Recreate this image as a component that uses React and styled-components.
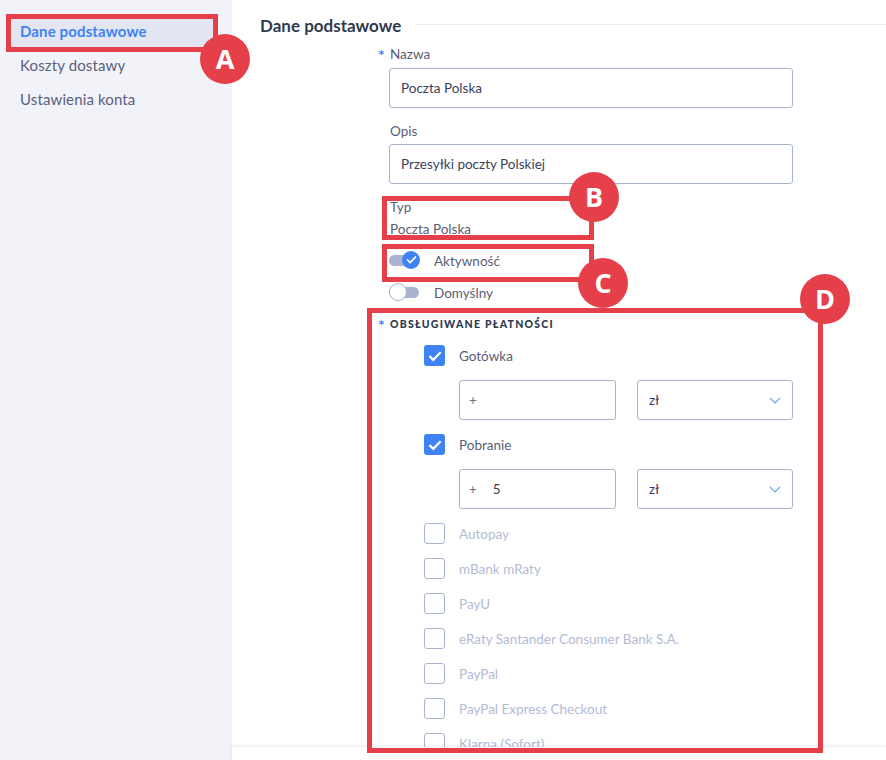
import React from "react";
import styled, { createGlobalStyle } from "styled-components";

const Global = createGlobalStyle`
  html, body { margin: 0; padding: 0; height: 760px; overflow: hidden; background: #fff; }
  * { box-sizing: border-box; }
  body { font-family: "Lato", "Noto Sans", sans-serif; color: #50536b; }
`;

const Page = styled.div`
  position: relative;
  display: flex;
  width: 886px;
  height: 760px;
  overflow: hidden;
`;

const Sidebar = styled.nav`
  flex: 0 0 232px;
  display: flex;
  flex-direction: column;
  padding: 14px 17px 0 8px;
  background: #f2f3f8;
`;

const NavItem = styled.div`
  height: 34px;
  padding-left: 12px;
  line-height: 34px;
  font-size: 15px;
  letter-spacing: 0.13px;
  font-weight: ${(props) => (props.$active ? 700 : 400)};
  color: ${(props) => (props.$active ? "#3f82f4" : "#5c6080")};
  background: ${(props) => (props.$active ? "#e3e6f0" : "transparent")};
`;

const Main = styled.main`
  flex: 1;
  padding: 14px 0 0 28px;
`;

const Heading = styled.div`
  display: flex;
  align-items: center;
  gap: 15px;
  height: 22px;
  margin-bottom: 8px;
  font-size: 17px;
  font-weight: 700;
  color: #2f3a4f;
  white-space: nowrap;
  &::after {
    content: "";
    flex: 1;
    height: 1px;
    margin-top: -2px;
    background: #ececf0;
  }
`;

const Form = styled.div`
  width: 404px;
  margin-left: 129px;
  display: flex;
  flex-direction: column;
`;

const Label = styled.div`
  position: relative;
  height: 20px;
  margin-bottom: ${(props) => props.$gap || 4}px;
  padding-left: 1px;
  line-height: 20px;
  font-size: 13.5px;
  color: #5a5d72;
`;

const Star = styled.span`
  position: absolute;
  left: -11px;
  top: 1px;
  font-size: 16px;
  color: #3f82f4;
  font-weight: 700;
`;

const Input = styled.div`
  display: flex;
  align-items: center;
  gap: 16px;
  width: ${(props) => props.$width || "100%"};
  height: 40px;
  padding: 0 ${(props) => props.$pad || 11}px;
  border: 1px solid #a9b4cf;
  border-radius: 3px;
  margin-bottom: ${(props) => props.$gap || 0}px;
  font-size: 13.5px;
  color: #3a3f5a;
`;

const Plus = styled.span`
  color: #6b6f86;
`;

const Select = styled(Input)`
  justify-content: space-between;
`;

const ReadValue = styled.div`
  height: 20px;
  padding-left: 1px;
  line-height: 20px;
  font-size: 13.5px;
  color: #5a5d72;
  margin-bottom: 5px;
`;

const ToggleRow = styled.div`
  display: flex;
  align-items: center;
  gap: 15px;
  height: 32px;
  font-size: 13.5px;
  color: #5a5d72;
`;

const ToggleText = styled.span`
  padding-top: 2px;
`;

const Track = styled.span`
  position: relative;
  flex: 0 0 30px;
  height: 11px;
  border-radius: 6px;
  background: #aab4d0;
`;

const Knob = styled.span`
  position: absolute;
  top: -4px;
  left: ${(props) => (props.$on ? "13px" : "0")};
  display: flex;
  align-items: center;
  justify-content: center;
  width: 18px;
  height: 18px;
  border-radius: 50%;
  background: ${(props) => (props.$on ? "#3f82f4" : "#fff")};
  border: ${(props) => (props.$on ? "none" : "1px solid #aab4d0")};
`;

const SectionTitle = styled.div`
  position: relative;
  height: 18px;
  margin: 7px 0 12px;
  padding-left: 1px;
  line-height: 18px;
  font-size: 10.5px;
  font-weight: 900;
  letter-spacing: 1.25px;
  color: #2f3a4f;
`;

const PaymentList = styled.div`
  display: flex;
  flex-direction: column;
  padding-left: 35px;
`;

const CheckRow = styled.div`
  display: flex;
  align-items: center;
  gap: 14px;
  height: 21px;
  margin-bottom: ${(props) => props.$gap}px;
  font-size: 13.5px;
  color: ${(props) => (props.$off ? "#b3bbd5" : "#5a5d72")};
`;

const Box = styled.span`
  flex: 0 0 21px;
  display: flex;
  align-items: center;
  justify-content: center;
  height: 21px;
  border-radius: 3px;
  background: ${(props) => (props.$on ? "#3f82f4" : "#fff")};
  border: ${(props) => (props.$on ? "none" : "1px solid #a9b4cf")};
`;

const Fields = styled.div`
  display: flex;
  justify-content: space-between;
  margin: 0 0 14px 35px;
`;

const Footer = styled.div`
  position: absolute;
  left: 232px;
  right: 0;
  top: 747px;
  bottom: 0;
  background: #fff;
  box-shadow: 0 -1px 4px rgba(40, 50, 80, 0.1);
`;

const Mark = styled.div`
  position: absolute;
  left: ${(props) => props.$x}px;
  top: ${(props) => props.$y}px;
  width: ${(props) => props.$w}px;
  height: ${(props) => props.$h}px;
  border: 5px solid #e5404a;
`;

const Badge = styled.div`
  position: absolute;
  left: ${(props) => props.$x - 25}px;
  top: ${(props) => props.$y - 25}px;
  width: 50px;
  height: 50px;
  border-radius: 50%;
  background: #e5404a;
  color: #fff;
  font-family: "Open Sans", sans-serif;
  font-size: 27px;
  font-weight: 700;
  line-height: 50px;
  text-align: center;
`;

const Check = ({ size = 14 }) => (
  <svg width={size} height={size} viewBox="0 0 12 12" fill="none">
    <path d="M1.2 6 4.5 9.3 10.8 2.8" stroke="#fff" strokeWidth="1.9" />
  </svg>
);

const Chevron = () => (
  <svg width="12" height="7" viewBox="0 0 12 7" fill="none">
    <path d="M1 1l5 5 5-5" stroke="#6c9ff2" strokeWidth="1.1" />
  </svg>
);

const disabledPayments = [
  "Autopay",
  "mBank mRaty",
  "PayU",
  "eRaty Santander Consumer Bank S.A.",
  "PayPal",
  "PayPal Express Checkout",
  "Klarna (Sofort)",
];

const FeeFields = ({ value }) => (
  <Fields>
    <Input $width="157px" $pad={9}>
      <Plus>+</Plus>
      {value}
    </Input>
    <Select $width="156px" $pad={11}>
      zł
      <Chevron />
    </Select>
  </Fields>
);

export default function App() {
  return (
    <>
      <Global />
      <Page>
        <Sidebar>
          <NavItem $active>Dane podstawowe</NavItem>
          <NavItem>Koszty dostawy</NavItem>
          <NavItem>Ustawienia konta</NavItem>
        </Sidebar>
        <Main>
          <Heading>Dane podstawowe</Heading>
          <Form>
            <Label>
              <Star>*</Star>Nazwa
            </Label>
            <Input $gap={13}>Poczta Polska</Input>
            <Label $gap={3}>Opis</Label>
            <Input $gap={13}>Przesyłki poczty Polskiej</Input>
            <Label $gap={2}>Typ</Label>
            <ReadValue>Poczta Polska</ReadValue>
            <ToggleRow>
              <Track>
                <Knob $on>
                  <Check size={11} />
                </Knob>
              </Track>
              <ToggleText>Aktywność</ToggleText>
            </ToggleRow>
            <ToggleRow>
              <Track>
                <Knob />
              </Track>
              <ToggleText>Domyślny</ToggleText>
            </ToggleRow>
            <SectionTitle>
              <Star>*</Star>OBSŁUGIWANE PŁATNOŚCI
            </SectionTitle>
            <PaymentList>
              <CheckRow $gap={14}>
                <Box $on>
                  <Check />
                </Box>
                Gotówka
              </CheckRow>
              <FeeFields />
              <CheckRow $gap={14}>
                <Box $on>
                  <Check />
                </Box>
                Pobranie
              </CheckRow>
              <FeeFields value="5" />
              {disabledPayments.map((name) => (
                <CheckRow $off $gap={14} key={name}>
                  <Box />
                  {name}
                </CheckRow>
              ))}
            </PaymentList>
          </Form>
        </Main>
        <Footer />
        <Mark $x={6} $y={14} $w={212} $h={38} />
        <Badge $x={225} $y={59}>A</Badge>
        <Mark $x={382} $y={196} $w={212} $h={44} />
        <Badge $x={594} $y={197}>B</Badge>
        <Mark $x={382} $y={244} $w={212} $h={38} />
        <Badge $x={603} $y={283}>C</Badge>
        <Mark $x={367} $y={308} $w={456} $h={445} />
        <Badge $x={825} $y={299}>D</Badge>
      </Page>
    </>
  );
}
